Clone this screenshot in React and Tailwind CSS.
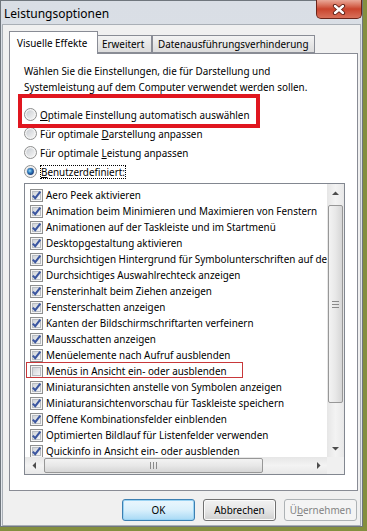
import React from "react";

const items = [
  ["Aero Peek aktivieren", true],
  ["Animation beim Minimieren und Maximieren von Fenstern", true],
  ["Animationen auf der Taskleiste und im Startmenü", true],
  ["Desktopgestaltung aktivieren", true],
  ["Durchsichtigen Hintergrund für Symbolunterschriften auf dem Desktop", true],
  ["Durchsichtiges Auswahlrechteck anzeigen", true],
  ["Fensterinhalt beim Ziehen anzeigen", true],
  ["Fensterschatten anzeigen", true],
  ["Kanten der Bildschirmschriftarten verfeinern", true],
  ["Mausschatten anzeigen", true],
  ["Menüelemente nach Aufruf ausblenden", true],
  ["Menüs in Ansicht ein- oder ausblenden", false],
  ["Miniaturansichten anstelle von Symbolen anzeigen", true],
  ["Miniaturansichtenvorschau für Taskleiste speichern", true],
  ["Offene Kombinationsfelder einblenden", true],
  ["Optimierten Bildlauf für Listenfelder verwenden", true],
  ["Quickinfo in Ansicht ein- oder ausblenden", true],
];

function CheckBox({ checked }) {
  return (
    <svg width="13" height="13" viewBox="0 0 13 13" className="shrink-0">
      <defs>
        <linearGradient id="cbfill" x1="0" y1="0" x2="1" y2="1">
          <stop offset="0" stopColor="#cdd1d6" />
          <stop offset="1" stopColor="#f8f8f8" />
        </linearGradient>
      </defs>
      <rect x="0.5" y="0.5" width="12" height="12" fill="#f5f5f5" stroke="#8e8f8f" />
      <rect x="2.5" y="2.5" width="8" height="8" fill="url(#cbfill)" stroke="#b9bdc2" />
      {checked && (
        <path d="M2.8 6.6 L5.2 9.2 L10.3 2.6" fill="none" stroke="#3b56a0" strokeWidth="2.1" />
      )}
    </svg>
  );
}

function Radio({ selected }) {
  return (
    <svg width="13" height="13" viewBox="0 0 13 13" className="shrink-0">
      <defs>
        <linearGradient id="rdfill" x1="0" y1="0" x2="1" y2="1">
          <stop offset="0" stopColor="#c9cdd2" />
          <stop offset="1" stopColor="#f5f5f5" />
        </linearGradient>
        <radialGradient id="rdsel" cx="0.4" cy="0.4" r="0.6">
          <stop offset="0" stopColor="#9fdcf8" />
          <stop offset="0.5" stopColor="#2f7ec0" />
          <stop offset="1" stopColor="#1a3d7c" />
        </radialGradient>
      </defs>
      <circle cx="6.5" cy="6.5" r="6" fill="#f4f4f4" stroke="#8e8f8f" />
      <circle cx="6.5" cy="6.5" r="4.2" fill="url(#rdfill)" />
      {selected && <circle cx="6.5" cy="6.5" r="3.4" fill="url(#rdsel)" />}
    </svg>
  );
}

function Arrow({ dir }) {
  const d = {
    up: "M0 4 L3.5 0.5 L7 4 Z",
    down: "M0 0 L3.5 3.5 L7 0 Z",
    left: "M4 0 L0.5 3.5 L4 7 Z",
    right: "M0 0 L3.5 3.5 L0 7 Z",
  }[dir];
  const vert = dir === "up" || dir === "down";
  return (
    <svg width={vert ? 7 : 4} height={vert ? 4 : 7} viewBox={vert ? "0 0 7 4" : "0 0 4 7"}>
      <path d={d} fill="#4d4d4d" />
    </svg>
  );
}

function Btn({ children, variant }) {
  const styles =
    variant === "default"
      ? "border-[#3c7fb1] bg-gradient-to-b from-[#eaf6fd] via-[#d9f0fc] to-[#a7d9f5] shadow-[inset_0_0_0_1px_#9ad3f3]"
      : variant === "disabled"
      ? "border-[#adb2b5] bg-[#f4f4f4] text-[#838383]"
      : "border-[#707070] bg-gradient-to-b from-[#f2f2f2] via-[#e6e6e6] to-[#d0d0d0] shadow-[inset_0_0_0_1px_#fbfbfb]";
  return (
    <div className={`flex h-[22px] w-[73px] items-center justify-center rounded-[3px] border ${styles}`}>
      {children}
    </div>
  );
}

export default function App() {
  return (
    <div className="h-[531px] w-[367px] bg-[#848f3f] font-['Noto_Sans',sans-serif] text-[9.9px] leading-[16px] text-black">
      <div className="flex h-[527px] w-[363px] flex-col border border-[#6f767d] bg-gradient-to-b from-[#d9dee5] to-[#e3e7ec]">
        {/* title bar */}
        <div className="flex h-[23px] shrink-0 items-start justify-between">
          <span className="pl-[3px] pt-[5px] text-[12px]">Leistungsoptionen</span>
          <div className="-mt-px flex h-[19px] w-[46px] items-center justify-center rounded-b-[5px] border border-t-0 border-[#6b2419] bg-gradient-to-b from-[#e9a898] via-[#c9432c] to-[#d8705a]">
            <svg width="14" height="11" viewBox="0 0 14 11">
              <path d="M3 2 L11 9 M11 2 L3 9" stroke="#5b1d14" strokeWidth="4.2" strokeLinecap="round" />
              <path d="M3 2 L11 9 M11 2 L3 9" stroke="#ffffff" strokeWidth="2.4" strokeLinecap="round" />
            </svg>
          </div>
        </div>

        {/* content */}
        <div className="mx-px flex flex-1 flex-col border border-[#a9afb6] bg-[#f0f0f0] pl-[6px] pt-[6px]">
          {/* tabs */}
          <div className="flex h-[22px] items-end whitespace-nowrap">
            <div className="z-10 -mb-px flex h-[23px] w-[89px] items-start border border-b-0 border-[#898c95] bg-white pl-[7px] pt-[3px]">
              Visuelle Effekte
            </div>
            <div className="-ml-px flex h-[18px] w-[55px] items-center border border-[#898c95] bg-gradient-to-b from-[#f3f3f3] to-[#dcdcdc] pl-[4px]">
              Erweitert
            </div>
            <div className="flex h-[18px] w-[163px] items-center border border-[#898c95] bg-gradient-to-b from-[#f3f3f3] to-[#dcdcdc] pl-[5px]">
              Datenausführungsverhinderung
            </div>
          </div>

          {/* panel */}
          <div className="relative h-[438px] w-[349px] border border-[#898c95] bg-white pl-[14px] pt-[9px]">
            <p className="whitespace-nowrap">
              Wählen Sie die Einstellungen, die für Darstellung und
              <br />
              Systemleistung auf dem Computer verwendet werden sollen.
            </p>

            <div className="mt-[10px] flex flex-col whitespace-nowrap">
              <div className="flex h-[19px] items-center gap-[3px]">
                <Radio />
                <span>
                  <u>O</u>ptimale Einstellung automatisch auswählen
                </span>
              </div>
              <div className="flex h-[19px] items-center gap-[3px]">
                <Radio />
                <span>
                  Für optimale <u>D</u>arstellung anpassen
                </span>
              </div>
              <div className="flex h-[19px] items-center gap-[3px]">
                <Radio />
                <span>
                  Für optimale <u>L</u>eistung anpassen
                </span>
              </div>
              <div className="flex h-[19px] items-center gap-[3px]">
                <Radio selected />
                <span className="border border-dotted border-black leading-[12px]">
                  <u>B</u>enutzerdefiniert:
                </span>
              </div>
            </div>

            {/* red highlight around first option */}
            <div className="absolute left-[8px] top-[40px] h-[34px] w-[242px] border-[4px] border-[#e0161f]" />

            {/* list box */}
            <div className="mt-[2px] grid h-[292px] w-[321px] grid-cols-[1fr_17px] grid-rows-[1fr_17px] border border-[#828790]">
              <div className="overflow-hidden pt-[3px]">
                {items.map(([label, checked], i) => (
                  <div key={i} className="relative flex h-[16px] items-center gap-[3px] whitespace-nowrap pl-[5px]">
                    <CheckBox checked={checked} />
                    <span>{label}</span>
                    {!checked && (
                      <div className="absolute left-px top-[-1px] h-[16px] w-[217px] border border-[#c8383a]" />
                    )}
                  </div>
                ))}
              </div>

              {/* vertical scrollbar */}
              <div className="flex flex-col bg-gradient-to-r from-[#e6e6e6] via-[#f3f3f3] to-[#e8e8e8]">
                <div className="flex h-[17px] items-center justify-center">
                  <Arrow dir="up" />
                </div>
                <div className="flex-1 px-px pt-[4px]">
                  <div className="flex h-[198px] flex-col items-center justify-center gap-[2px] rounded-[2px] border border-[#979797] bg-gradient-to-r from-[#f3f3f3] via-[#e8e8e8] to-[#d6d6d6]">
                    <div className="h-px w-[7px] bg-[#8a8a8a]" />
                    <div className="h-px w-[7px] bg-[#8a8a8a]" />
                    <div className="h-px w-[7px] bg-[#8a8a8a]" />
                  </div>
                </div>
                <div className="flex h-[17px] items-center justify-center">
                  <Arrow dir="down" />
                </div>
              </div>

              {/* horizontal scrollbar */}
              <div className="flex bg-gradient-to-b from-[#e6e6e6] via-[#f3f3f3] to-[#e8e8e8]">
                <div className="flex w-[17px] items-center justify-center">
                  <Arrow dir="left" />
                </div>
                <div className="flex-1 py-px pl-[2px]">
                  <div className="flex h-full w-[219px] items-center justify-center gap-[2px] rounded-[2px] border border-[#979797] bg-gradient-to-b from-[#f3f3f3] via-[#e8e8e8] to-[#d6d6d6]">
                    <div className="h-[7px] w-px bg-[#8a8a8a]" />
                    <div className="h-[7px] w-px bg-[#8a8a8a]" />
                    <div className="h-[7px] w-px bg-[#8a8a8a]" />
                  </div>
                </div>
                <div className="flex w-[17px] items-center justify-center">
                  <Arrow dir="right" />
                </div>
              </div>
              <div className="bg-[#f0f0f0]" />
            </div>
          </div>

          {/* buttons */}
          <div className="mt-[8px] flex w-[349px] justify-end gap-[8px] pr-px">
            <Btn variant="default">OK</Btn>
            <Btn>Abbrechen</Btn>
            <Btn variant="disabled">
              <span>
                Ü<u>b</u>ernehmen
              </span>
            </Btn>
          </div>
        </div>
      </div>
    </div>
  );
}
